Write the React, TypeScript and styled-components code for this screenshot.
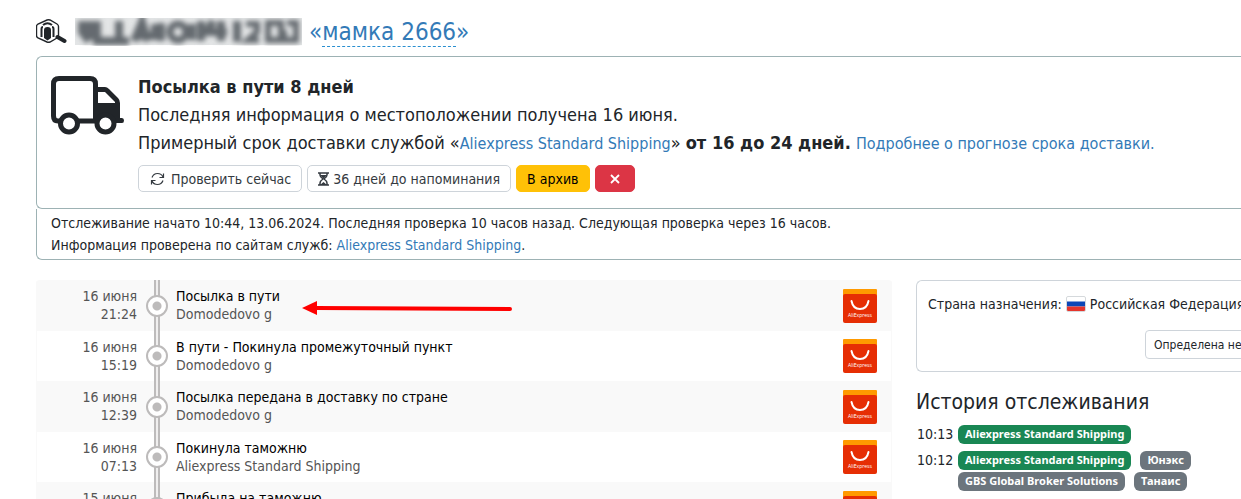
import React from 'react';
import styled, { createGlobalStyle } from 'styled-components';

const GlobalStyle = createGlobalStyle`
  * { box-sizing: border-box; }
  body {
    margin: 0;
    background: #fff;
    color: #212529;
    font-family: Tahoma, 'DejaVu Sans Condensed', 'Noto Sans', sans-serif;
    font-size: 14px;
    line-height: 22px;
  }
`;

const Page = styled.div`
  padding-left: 36px;
  height: 100vh;
  overflow: hidden;
`;

const Link = styled.a<{ $size?: number }>`
  color: #337ab7;
  text-decoration: none;
  font-size: ${(p) => (p.$size ? `${p.$size}px` : 'inherit')};
`;

const Header = styled.header`
  display: flex;
  align-items: center;
  gap: 8px;
  height: 56px;
  padding-top: 8px;
`;

const Title = styled.h1`
  display: flex;
  align-items: center;
  gap: 7px;
  margin: 0;
  font-size: 24px;
  line-height: 28px;
  font-weight: 400;
  white-space: nowrap;
  color: #337ab7;
`;

const EditableName = styled.a`
  color: inherit;
  text-decoration: none;
  border-bottom: 1px dashed #2a8fd0;
`;

const StatusCard = styled.section`
  display: flex;
  gap: 14px;
  padding: 16px 0 16px 14px;
  border: 1px solid #9db2b4;
  border-right: 0;
  border-radius: 6px 0 0 6px;
  white-space: nowrap;
`;

const StatusBody = styled.div`
  font-size: 18px;
  line-height: 28px;
`;

const Line = styled.p`
  margin: 0;
`;

const Actions = styled.div`
  display: flex;
  gap: 5px;
  margin-top: 7px;
`;

const Button = styled.button<{ $tone?: 'warning' | 'danger' }>`
  display: flex;
  align-items: center;
  justify-content: center;
  gap: 4px;
  height: 27px;
  min-width: 40px;
  padding: 0 10px;
  border: 1px solid ${(p) => (p.$tone === 'warning' ? '#ffc107' : p.$tone === 'danger' ? '#dc3545' : '#ced4da')};
  border-radius: 5px;
  background: ${(p) => (p.$tone === 'warning' ? '#ffc107' : p.$tone === 'danger' ? '#dc3545' : '#fff')};
  color: ${(p) => (p.$tone === 'warning' ? '#000' : p.$tone === 'danger' ? '#fff' : '#343a40')};
  font: inherit;
  font-size: 14px;
  line-height: 20px;
  white-space: nowrap;
`;

const CheckInfo = styled.section`
  padding: 3px 0 3px 14px;
  border: 1px solid #9db2b4;
  border-top: 0;
  border-right: 0;
  border-radius: 0 0 0 6px;
  white-space: nowrap;
`;

const Columns = styled.div`
  display: grid;
  grid-template-columns: minmax(0, 1fr) 325px;
  gap: 24px;
  margin-top: 20px;
`;

const Timeline = styled.ol`
  list-style: none;
  margin: 0;
  padding: 0;
  border-radius: 4px;
  overflow: hidden;
`;

const Event = styled.li`
  display: grid;
  grid-template-columns: 100px 39px minmax(0, 1fr) 34px;
  align-items: stretch;
  height: 50px;
  padding-right: 14px;
  border: 0 solid #f9f9f9;
  border-width: 0 1px;
  &:nth-child(odd) {
    height: 51px;
    background: #f9f9f9;
  }
`;

const EventText = styled.div<{ $right?: boolean }>`
  padding-top: 7px;
  line-height: 18px;
  color: #555;
  text-align: ${(p) => (p.$right ? 'right' : 'left')};
`;

const EventTitle = styled.div`
  color: #000;
`;

const Rail = styled.div`
  display: flex;
  align-items: center;
  justify-content: center;
  background: linear-gradient(90deg, #bdbbbb 2px, #f0efef 2px 4px, #bdbbbb 4px) center / 6px 100% no-repeat;
`;

const Marker = styled.span`
  width: 22px;
  height: 22px;
  border: 2px solid #bdbbbb;
  border-radius: 50%;
  background: radial-gradient(circle, #bdbbbb 4px, #fff 5px);
`;

const LogoCell = styled.div`
  display: flex;
  align-items: center;
`;

const ArrowLayer = styled.svg`
  position: absolute;
  left: 266px;
  top: 20px;
`;

const TimelineWrap = styled.div`
  position: relative;
`;

const Destination = styled.section`
  height: 92px;
  padding: 12px 0 0 11px;
  border: 1px solid #ced4da;
  border-right: 0;
  border-radius: 6px 0 0 6px;
  white-space: nowrap;
  overflow: hidden;
`;

const Country = styled.div`
  display: flex;
  align-items: center;
  gap: 4px;
  svg { flex: none; }
`;

const WrongButton = styled(Button)`
  height: 29px;
  margin: 15px 0 0 217px;
  padding: 0 8px;
  border-radius: 4px;
  color: #212529;
  font-size: 12px;
`;

const SideTitle = styled.h2`
  margin: 16px 0 7px;
  font-size: 21px;
  line-height: 28px;
  font-weight: 400;
`;

const HistoryRow = styled.div`
  display: grid;
  grid-template-columns: 37px minmax(0, 1fr);
  column-gap: 4px;
  margin-bottom: 4px;
  padding-left: 1px;
`;

const Badges = styled.div`
  display: flex;
  flex-wrap: wrap;
  gap: 2px 9px;
  padding-top: 2px;
`;

const Badge = styled.span<{ $muted?: boolean }>`
  height: 19px;
  padding: 0 7px;
  border-radius: 6px;
  background: ${(p) => (p.$muted ? '#6c757d' : '#198754')};
  color: #fff;
  font-family: 'Noto Sans', sans-serif;
  font-size: 11px;
  line-height: 18px;
  font-weight: 700;
  white-space: nowrap;
`;

const HiddenCode = () => (
  <svg width="227" height="28" viewBox="0 0 227 28" aria-hidden="true">
    <defs>
      <filter id="soft" x="-5%" y="-20%" width="110%" height="140%">
        <feGaussianBlur stdDeviation="2.800" />
      </filter>
    </defs>
    <rect width="227" height="27" fill="#e3e5e6" />
    <g filter="url(#soft)" stroke="#656b70" strokeWidth="8" fill="none">
      <path d="M7 3V14L14 23M14 3V22M22 3V23H38M44 3V23M38 23H54M59 23 67 4 73 23M62 18H76" />
      <path d="M80 6V22M86 5V23" />
      <circle cx="103" cy="14" r="8" strokeWidth="7" />
      <path d="M117 6V22M126 3V23M138 3 132 14H152M146 3V23M162 3V24" />
      <path d="M171 6H182V14L173 22H184M193 5H206V22H193ZM212 5H221V22H209V12" strokeWidth="6" />
    </g>
  </svg>
);

const SearchBox = () => (
  <svg width="31" height="26" viewBox="1 0 31 26" fill="none" stroke="#212529">
    <path d="M12 1Q13.500 0.500 15 1L22 5Q23.500 6 23.500 7.500V16.500Q23.500 18 22 19L15 23Q13.500 23.500 12 23L3 19Q1.500 18 1.500 16.500V7.500Q1.500 6 3 5Z" strokeWidth="1.400" />
    <path d="M8 6Q12.500 2.500 17 6M6.500 18V10Q6.500 8 8 8M18.500 18V10Q18.500 8 17 8" strokeWidth="2" />
    <path d="M9 11Q9 8 12.500 8T16 11V19L12.500 21.500 9 19Z" fill="#212529" stroke="none" />
    <path d="M22.500 18 29.500 22" strokeWidth="4" strokeLinecap="round" />
  </svg>
);

const TruckIcon = styled.svg`
  margin-top: 3px;
`;

const Truck = () => (
  <TruckIcon width="73" height="59" viewBox="0 0 73 59" fill="none" stroke="#212529" strokeWidth="5">
    <path d="M10 45H7Q2.500 45 2.500 40V8Q2.500 2.500 8 2.500H39Q44.500 2.500 44.500 8V45H27" />
    <path d="M44 11H54Q56 11 58 13L67 22Q69 24 69 27V42H71Q73 42 73 44.500T71 47H46L44 45Z" fill="#212529" stroke="none" />
    <path d="M47 16H54L64 26V27H47Z" fill="#fff" stroke="none" />
    <circle cx="18" cy="47.500" r="8.500" fill="#fff" />
    <circle cx="54.500" cy="47.500" r="8.500" fill="#fff" />
  </TruckIcon>
);

const Refresh = () => (
  <svg width="18" height="14" viewBox="-1 0 18 14" fill="none" stroke="#343a40" strokeWidth="1.200">
    <path d="M2 5.500Q3.500 1.500 7.500 1.500T13 5M13.500 1.500V5.500H9.500M13 8.500Q11.500 12.500 7.500 12.500T2 9M1.500 12.500V8.500H5.500" />
  </svg>
);

const Hourglass = () => (
  <svg width="11" height="14" viewBox="0 0 11 14" fill="none" stroke="#343a40" strokeWidth="1.500">
    <path d="M0 1H11M0 13H11M2 1V3Q2 5 5 7Q2 9 2 11V13M9 1V3Q9 5 6 7Q9 9 9 11V13" />
    <path d="M2 3H9L5.500 7ZM2 13 5.500 10 9 13Z" fill="#343a40" stroke="none" />
  </svg>
);

const Cross = () => (
  <svg width="10" height="10" viewBox="0 0 10 10" stroke="#fff" strokeWidth="1.800">
    <path d="M1 1 9 9M9 1 1 9" />
  </svg>
);

const AliLogo = () => (
  <svg width="34" height="34" viewBox="0 0 34 34" role="img" aria-label="AliExpress">
    <path d="M0 8V1Q0 0 1 0H33Q34 0 34 1V8Z" fill="#ff9a00" />
    <path d="M0 7Q0 5 2 5H32Q34 5 34 7V32Q34 34 32 34H2Q0 34 0 32Z" fill="#e62e04" />
    <path d="M8.500 12Q10 20 17 20T25.500 12" fill="none" stroke="#fff" strokeWidth="2" strokeLinecap="round" />
    <text x="17" y="28" fill="#fff" fontSize="5" textAnchor="middle" fontFamily="Open Sans, sans-serif">AliExpress</text>
  </svg>
);

const Flag = () => (
  <svg width="20" height="16" viewBox="0 0 20 16">
    <rect x="0.500" y="0.500" width="19" height="15" rx="1.500" fill="#fff" stroke="#d5d9dc" />
    <path d="M1 5.500H19V10.500H1Z" fill="#0c47b7" />
    <path d="M1 10.500H19V14Q19 15 18 15H2Q1 15 1 14Z" fill="#e5352c" />
  </svg>
);

const events = [
  { date: '16 июня', time: '21:24', title: 'Посылка в пути', place: 'Domodedovo g' },
  { date: '16 июня', time: '15:19', title: 'В пути - Покинула промежуточный пункт', place: 'Domodedovo g' },
  { date: '16 июня', time: '12:39', title: 'Посылка передана в доставку по стране', place: 'Domodedovo g' },
  { date: '16 июня', time: '07:13', title: 'Покинула таможню', place: 'Aliexpress Standard Shipping' },
  { date: '15 июня', time: '', title: 'Прибыла на таможню', place: '' },
];

export default function App() {
  return (
    <>
      <GlobalStyle />
      <Page>
        <Header>
          <SearchBox />
          <Title>
            <HiddenCode />
            <span>«<EditableName href="#name">мамка 2666</EditableName>»</span>
          </Title>
        </Header>
        <StatusCard>
          <Truck />
          <StatusBody>
            <Line><strong>Посылка в пути 8 дней</strong></Line>
            <Line>Последняя информация о местоположении получена 16 июня.</Line>
            <Line>
              Примерный срок доставки службой «<Link $size={16} href="#service">Aliexpress Standard Shipping</Link>»{' '}
              <strong>от 16 до 24 дней.</strong> <Link $size={16} href="#forecast">Подробнее о прогнозе срока доставки.</Link>
            </Line>
            <Actions>
              <Button><Refresh />Проверить сейчас</Button>
              <Button><Hourglass />36 дней до напоминания</Button>
              <Button $tone="warning">В архив</Button>
              <Button $tone="danger" aria-label="Удалить"><Cross /></Button>
            </Actions>
          </StatusBody>
        </StatusCard>
        <CheckInfo>
          <Line>Отслеживание начато 10:44, 13.06.2024. Последняя проверка 10 часов назад. Следующая проверка через 16 часов.</Line>
          <Line>Информация проверена по сайтам служб: <Link href="#service">Aliexpress Standard Shipping</Link>.</Line>
        </CheckInfo>
        <Columns>
          <TimelineWrap>
            <Timeline>
              {events.map((e) => (
                <Event key={e.date + e.title}>
                  <EventText $right><div>{e.date}</div><div>{e.time}</div></EventText>
                  <Rail><Marker /></Rail>
                  <EventText><EventTitle>{e.title}</EventTitle><div>{e.place}</div></EventText>
                  <LogoCell><AliLogo /></LogoCell>
                </Event>
              ))}
            </Timeline>
            <ArrowLayer width="212" height="18" viewBox="0 0 212 18">
              <path d="M14 8 208 9" stroke="#f00" strokeWidth="4" strokeLinecap="round" />
              <path d="M0 8 15 1V15Z" fill="#f00" />
            </ArrowLayer>
          </TimelineWrap>
          <aside>
            <Destination>
              <Country><span>Страна назначения:</span><Flag /><span>Российская Федерация</span></Country>
              <WrongButton>Определена неверно</WrongButton>
            </Destination>
            <SideTitle>История отслеживания</SideTitle>
            <HistoryRow>
              <span>10:13</span>
              <Badges><Badge>Aliexpress Standard Shipping</Badge></Badges>
            </HistoryRow>
            <HistoryRow>
              <span>10:12</span>
              <Badges>
                <Badge>Aliexpress Standard Shipping</Badge><Badge $muted>Юнэкс</Badge>
                <Badge $muted>GBS Global Broker Solutions</Badge><Badge $muted>Танаис</Badge>
              </Badges>
            </HistoryRow>
          </aside>
        </Columns>
      </Page>
    </>
  );
}
